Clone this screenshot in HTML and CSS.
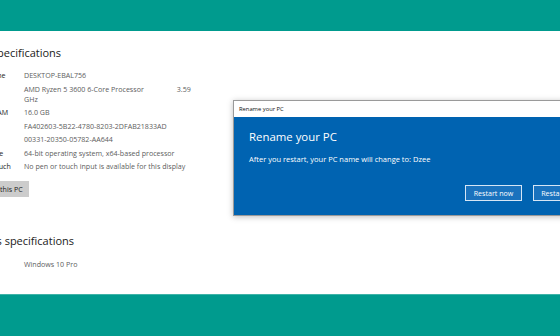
FILE: index.html
```html
<!DOCTYPE html>
<html>
<head>
<meta charset="utf-8">
<link rel="stylesheet" href="styles.css">
</head>
<body>
<div class="page">
  <div class="band band-top"></div>
  <main class="content">
    <h2 class="heading">Device specifications</h2>
    <div class="specs">
      <div class="label">Device name</div><div class="value">DESKTOP-EBAL756</div>
      <div class="label">Processor</div><div class="value"><div class="proc"><span>AMD Ryzen 5 3600 6-Core Processor</span><span class="ghz">3.59</span></div><div>GHz</div></div>
      <div class="label">Installed RAM</div><div class="value">16.0 GB</div>
      <div class="label">Device ID</div><div class="value">FA402603-5B22-4780-8203-2DFAB21833AD</div>
      <div class="label">Product ID</div><div class="value">00331-20350-05782-AA644</div>
      <div class="label">System type</div><div class="value">64-bit operating system, x64-based processor</div>
      <div class="label">Pen and touch</div><div class="value">No pen or touch input is available for this display</div>
    </div>
    <button class="rename-btn">Rename this PC</button>
    <h2 class="heading heading-win">Windows specifications</h2>
    <div class="specs specs-win">
      <div class="label">Edition</div><div class="value">Windows 10 Pro</div>
    </div>
  </main>
  <div class="band band-bottom"></div>

  <div class="dialog">
    <div class="dialog-title">Rename your PC</div>
    <div class="dialog-body">
      <div class="dialog-heading">Rename your PC</div>
      <div class="dialog-text">After you restart, your PC name will change to: Dzee</div>
      <div class="dialog-actions">
        <button class="dlg-btn">Restart now</button>
        <button class="dlg-btn">Restart later</button>
      </div>
    </div>
  </div>
</div>
</body>
</html>
```
FILE: styles.css
```css
html, body {
  margin: 0;
  padding: 0;
  background: #ffffff;
  overflow: hidden;
}
.page {
  position: relative;
  width: 560px;
  height: 336px;
  display: flex;
  flex-direction: column;
  font-family: "Open Sans", "Noto Sans", sans-serif;
  overflow: hidden;
}
.band {
  background: #009b8e;
  flex: none;
}
.band-top { height: 31px; }
.band-bottom { height: 41px; border-top: 1px solid #3fb3a8; }
.content {
  flex: 1;
  padding-top: 16px;
  margin-left: -45px;
}
.heading {
  margin: 0;
  font-weight: 400;
  font-size: 11px;
  line-height: 12px;
  color: #1a1a1a;
}
.heading-win { margin-top: 38px; }
.specs {
  margin-top: 11px;
  display: grid;
  grid-template-columns: 62px 220px;
  padding-left: 8px;
  row-gap: 3.5px;
  font-size: 7.1px;
  line-height: 10px;
}
.specs .value { margin-left: -1px; }
.specs-win { margin-top: 12px; }
.label { color: #1a1a1a; }
.value { color: #5d5d5d; }
.proc { display: flex; }
.proc .ghz { margin-left: 33px; }
.rename-btn {
  display: block;
  margin-top: 10px;
  height: 16px;
  width: 74px;
  padding: 0 0 0 16px;
  border: 0;
  background: #cccccc;
  color: #1a1a1a;
  font-family: inherit;
  font-size: 7.1px;
  text-align: left;
}
.dialog {
  position: absolute;
  left: 233px;
  top: 100px;
  width: 340px;
  border: 1px solid #9a9a9a;
  box-shadow: 0 1px 6px rgba(0,0,0,0.25);
  background: #0063b1;
}
.dialog-title {
  height: 16px;
  background: #ffffff;
  font-size: 5.8px;
  line-height: 16px;
  padding-left: 5px;
  color: #111;
}
.dialog-body {
  background: #0063b1;
  padding: 13px 0 14px 15px;
  color: #ffffff;
}
.dialog-heading {
  font-size: 11.4px;
  line-height: 14px;
}
.dialog-text {
  margin-top: 10px;
  font-size: 7.5px;
  line-height: 10px;
}
.dialog-actions {
  margin-top: 21px;
  display: flex;
  gap: 11px;
  padding-left: 216px;
}
.dlg-btn {
  height: 16px;
  width: 57px;
  padding: 0;
  border: 1px solid #d6e6f5;
  background: #1a72bd;
  color: #ffffff;
  font-family: inherit;
  font-size: 7.1px;
  flex: none;
}
```
